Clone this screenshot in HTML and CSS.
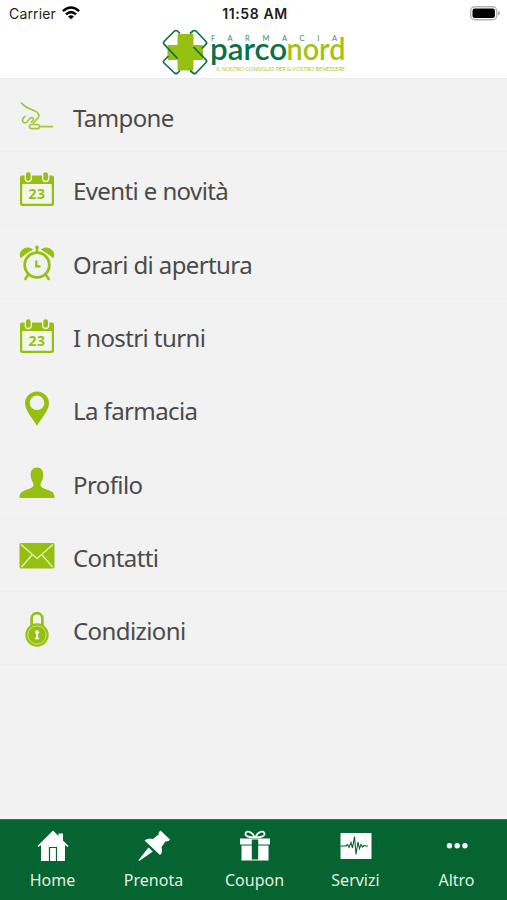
FILE: index.html
```html
<!DOCTYPE html>
<html lang="it">
<head>
  <meta charset="UTF-8">
  <meta name="viewport" content="width=device-width, initial-scale=1.0">
  <title>Farmacia Parconord</title>
  <link rel="stylesheet" href="styles.css">
</head>
<body>

  <header>
    <div class="status">
      <div class="carrier">
        <span>Carrier</span>
        <svg width="18" height="14" viewBox="0 0 18 14" fill="none" stroke="#000" stroke-width="2.500">
          <path d="M0.900 5.200Q9 -2.300 17.100 5.200"/>
          <path d="M4 8.400Q9 3.800 14 8.400"/>
          <path d="M9 13.300L6 10.400Q9 8 12 10.400Z" fill="#000" stroke="none"/>
        </svg>
      </div>
      <span class="time">11:58 AM</span>
      <svg class="battery" width="31" height="15" viewBox="0 0 31 15">
        <rect x="0.700" y="0.700" width="26" height="13" rx="4" fill="#fff" stroke="#b4b4b4" stroke-width="1.400"/>
        <rect x="2.500" y="2.500" width="22.400" height="9.400" rx="2.200"/>
        <path d="M28 5Q30 5.500 30 7.200T28 9.400Z" fill="#aaa"/>
      </svg>
    </div>

    <svg class="logo" width="186" height="48" viewBox="0 0 186 48">
      <path d="M17.500 5H31.500Q32.500 5 32.500 6V16H41Q42 16 42 17V30Q42 31 41 31H32.500V40.500Q32.500 41.500 31.500 41.500H17.500Q16.500 41.500 16.500 40.500V31H7.500Q6.500 31 6.500 30V17Q6.500 16 7.500 16H16.500V6Q16.500 5 17.500 5Z" fill="#96c010"/>
      <g fill="none" stroke="#0c7048" stroke-width="1.700" stroke-linejoin="round">
        <path d="M19 4.500L16.500 2Q15 1 13.500 2L3 12.500Q1.800 14 3 15.200L16.500 29.500"/>
        <path d="M29 4.500L32 2Q33.500 1 35 2L45 12.500Q46.300 14 45 15.200L41 19.500"/>
        <path d="M32.500 18L45 30.800Q46.300 32.200 45 33.500L35 44Q33.500 45.300 32 44L29 41.500"/>
        <path d="M7.500 27L3 31.500Q1.800 32.800 3 34L13.500 44Q15 45.300 16.500 44L19 41.500"/>
      </g>
      <text x="50" y="11.700" textLength="126" class="logo-top">FARMACIA</text>
      <text x="49" y="30.900" textLength="77" lengthAdjust="spacingAndGlyphs" class="logo-name">parco</text>
      <text x="125.500" y="30.900" textLength="59" lengthAdjust="spacingAndGlyphs" class="logo-name light">nord</text>
      <text x="55" y="41.500" textLength="129" lengthAdjust="spacingAndGlyphs" class="logo-sub">IL NOSTRO CONSIGLIO PER IL VOSTRO BENESSERE</text>
    </svg>
  </header>

  <main>
    <ul class="menu">
      <li>
        <svg class="icon" viewBox="0 -3 36 36" fill="none" stroke="#a3c83a" stroke-width="1.700" stroke-linecap="round" stroke-linejoin="round">
          <path d="M2.500 2C5 6 10 7.500 15 9.500C20 11.500 21.500 15 18 18L14.500 22"/>
          <path d="M6 15.500C3 17 2.500 21.500 6 22C9.500 22 9 17 12.500 16.500C15.500 16.500 14.500 19.500 12.500 21"/>
          <rect x="10.500" y="23.500" width="10" height="4.200" rx="2.100"/>
          <path d="M20.500 25.600H33.500"/>
        </svg>
        <span>Tampone</span>
      </li>
      <li>
        <svg class="icon" viewBox="0 0 36 36">
          <path d="M3 4.500H33Q35 4.500 35 6.500V32.500Q35 35 32.500 35H3.500Q1 35 1 32.500V6.500Q1 4.500 3 4.500Z" fill="#96c010"/>
          <rect x="3.200" y="13" width="29.600" height="19.800" rx="1" fill="#f4f6ec"/>
          <rect x="6.300" y="0.500" width="6" height="10" rx="3" fill="#96c010" stroke="#f2f2f2" stroke-width="1.300"/>
          <rect x="23.700" y="0.500" width="6" height="10" rx="3" fill="#96c010" stroke="#f2f2f2" stroke-width="1.300"/>
          <text x="9.500" y="28.300" class="day">23</text>
        </svg>
        <span>Eventi e novità</span>
      </li>
      <li>
        <svg class="icon" viewBox="0 0 36 36" fill="none" stroke="#96c010">
          <path d="M1.800 12.500C-1 6.500 6.500 0 13.500 4.500Q12 5.500 8.500 7.500Q4.500 10.500 1.800 12.500Z" fill="#96c010" stroke-width="1"/>
          <path d="M34.200 12.500C37 6.500 29.500 0 22.500 4.500Q24 5.500 27.500 7.500Q31.500 10.500 34.200 12.500Z" fill="#96c010" stroke-width="1"/>
          <circle cx="18" cy="20" r="12.300" stroke-width="2.800"/>
          <path d="M18 2.500V7.500M9 30L6.300 34M27 30L29.700 34" stroke-width="2.500" stroke-linecap="round"/>
          <circle cx="18" cy="2.200" r="1.700" fill="#96c010" stroke="none"/>
          <path d="M17.300 15.500V21.300H21.500" stroke-width="2.300"/>
        </svg>
        <span>Orari di apertura</span>
      </li>
      <li>
        <svg class="icon" viewBox="0 0 36 36">
          <path d="M3 4.500H33Q35 4.500 35 6.500V32.500Q35 35 32.500 35H3.500Q1 35 1 32.500V6.500Q1 4.500 3 4.500Z" fill="#96c010"/>
          <rect x="3.200" y="13" width="29.600" height="19.800" rx="1" fill="#f4f6ec"/>
          <rect x="6.300" y="0.500" width="6" height="10" rx="3" fill="#96c010" stroke="#f2f2f2" stroke-width="1.300"/>
          <rect x="23.700" y="0.500" width="6" height="10" rx="3" fill="#96c010" stroke="#f2f2f2" stroke-width="1.300"/>
          <text x="9.500" y="28.300" class="day">23</text>
        </svg>
        <span>I nostri turni</span>
      </li>
      <li>
        <svg class="icon" viewBox="0 0 36 36">
          <path fill-rule="evenodd" d="M18 35C15 29 6 20 6 12.500A12 12 0 0 1 30 12.500C30 20 21 29 18 35ZM18 4.500A7.300 7.300 0 1 0 18 19.100A7.300 7.300 0 1 0 18 4.500Z" fill="#96c010"/>
        </svg>
        <span>La farmacia</span>
      </li>
      <li>
        <svg class="icon" viewBox="0 0 36 36">
          <path d="M18 2.500C22.500 2.500 24.500 6 24.300 10.500C24 14.500 22.500 16.500 21.500 19C21.500 22 23 23 27 24.300C33 26.300 35.500 27.500 35.500 33H0.500C0.500 27.500 3 26.300 9 24.300C13 23 14.500 22 14.500 19C13.500 16.500 12 14.500 11.700 10.500C11.500 6 13.500 2.500 18 2.500Z" fill="#96c010"/>
        </svg>
        <span>Profilo</span>
      </li>
      <li>
        <svg class="icon" viewBox="0 0 36 36">
          <rect x="0.500" y="5" width="35" height="25.500" rx="1.500" fill="#96c010"/>
          <path d="M2 6.500L18 20.500L34 6.500M2.500 29L13 17M33.500 29L23 17" fill="none" stroke="#e6f0c4" stroke-width="1.300"/>
        </svg>
        <span>Contatti</span>
      </li>
      <li>
        <svg class="icon" viewBox="0 0 36 36">
          <path d="M12.600 15V7.500A5.400 5.400 0 0 1 23.400 7.500V15" fill="none" stroke="#96c010" stroke-width="2.700"/>
          <circle cx="18" cy="24" r="11.700" fill="#96c010"/>
          <circle cx="18" cy="24" r="9.200" fill="none" stroke="#d8e8a0" stroke-width="0.900"/>
          <circle cx="18" cy="21.300" r="2.100" fill="#f5f8ea"/>
          <path d="M17 22H19V26.500H20V28.300H16V26.500H17Z" fill="#f5f8ea"/>
        </svg>
        <span>Condizioni</span>
      </li>
    </ul>
  </main>

  <nav>
    <a class="tab">
      <svg viewBox="0 0 34 34">
        <path d="M17 1.500L22.500 7V4.500H27V11.500L32.500 17L31.500 18L29 16V32H5V16L2.500 18L1.500 17Z" fill="#fff"/>
        <path d="M13.500 32V18.500H20.500V32" fill="none" stroke="#066431" stroke-width="1.200"/>
      </svg>
      <span>Home</span>
    </a>
    <a class="tab">
      <svg viewBox="0 0 34 34">
        <path d="M23.500 1.500L33 10.500L31.500 12L28.500 12.500L24.500 18C25.500 22 25 24.500 23 26L7.500 11.500C9.500 9.500 13 9.500 16 10L21.500 5.500L22 3Z" fill="#fff"/>
        <path d="M11.500 18.500L15.800 22.500L3 31.500L1.500 32L2 30.500Z" fill="#fff"/>
      </svg>
      <span>Prenota</span>
    </a>
    <a class="tab">
      <svg viewBox="0 0 34 34" fill="#fff">
        <path d="M2 9.500H13.800V15.500H2ZM20.200 9.500H32V15.500H20.200ZM3.500 16.500H13.800V31.500H3.500ZM20.200 16.500H30.500V31.500H20.200ZM13.800 9.500H20.200V10.500H13.800ZM13.800 30.500H20.200V31.500H13.800Z"/>
        <path d="M16.500 8.500C12 8.500 7 7.500 7.500 4.500C8.500 0.500 15 3 16.500 8.500ZM17.500 8.500C22 8.500 27 7.500 26.500 4.500C25.500 0.500 19 3 17.500 8.500Z" fill="none" stroke="#fff" stroke-width="1.700"/>
      </svg>
      <span>Coupon</span>
    </a>
    <a class="tab">
      <svg viewBox="0 0 34 34">
        <rect x="1.500" y="4" width="31" height="26" rx="0.700" fill="#fff"/>
        <path d="M1.500 17H7L8.500 15.500L10 18.500L12 13.500L13.500 19L15.500 7.500L17 25.500L19 13L20.500 19.500L22 15.500L23.500 18L25 16.500L26.500 17H29" fill="none" stroke="#066431" stroke-width="1.100"/>
      </svg>
      <span>Servizi</span>
    </a>
    <a class="tab">
      <svg viewBox="0 0 34 34" fill="#fff">
        <circle cx="9.500" cy="16.800" r="2.700"/>
        <circle cx="17.200" cy="16.800" r="2.700"/>
        <circle cx="24.900" cy="16.800" r="2.700"/>
      </svg>
      <span>Altro</span>
    </a>
  </nav>

</body>
</html>
```

FILE: styles.css
```css
*, *::after, *::before {
  margin: 0;
  padding: 0;
  box-sizing: border-box;
}
body {
  display: flex;
  flex-direction: column;
  height: 100vh;
  font-family: 'Noto Sans', sans-serif;
  background: #f2f2f2;
  color: #4a4a4a;
  overflow: hidden;
}

/* header */
header {
  height: 79px;
  background: white;
  border-bottom: 1px solid #e9e9e9;
}
.status {
  display: grid;
  grid-template-columns: 1fr auto 1fr;
  align-items: center;
  height: 27px;
  padding: 0 6px 0 9px;
  font-family: Inter, sans-serif;
  font-size: 14px;
  color: #1c1c1c;
}
.carrier {
  display: flex;
  align-items: center;
  gap: 6px;
  letter-spacing: 0.15px;
}
.carrier svg {
  margin-bottom: 2px;
}
.time {
  font-weight: 600;
  letter-spacing: 0.6px;
}
.battery {
  justify-self: end;
}
.logo {
  display: block;
  margin: 2px auto 0;
  overflow: visible;
}
.logo-top {
  font-family: Lato, sans-serif;
  font-size: 7.5px;
  fill: #3f8a68;
}
.logo-name {
  font-family: Lato, sans-serif;
  font-size: 31px;
  font-weight: 600;
  fill: #0c7048;
}
.light {
  fill: #a3c414;
}
.logo-sub {
  font-family: Lato, sans-serif;
  font-size: 6px;
  fill: #a9c63a;
}

/* menu */
main {
  flex: 1;
}
.menu {
  list-style: none;
}
.menu li {
  display: flex;
  align-items: center;
  gap: 18px;
  height: 73.3px;
  padding: 2px 19px 0 19px;
  border-bottom: 1px solid #efefef;
  font-size: 24px;
  letter-spacing: -0.6px;
}
.icon {
  width: 36px;
  height: 36px;
}
.menu span {
  padding-top: 3px;
}
.day {
  font-size: 14px;
  font-weight: 700;
  letter-spacing: 0.5px;
  fill: #96c010;
}

/* bottom bar */
nav {
  display: flex;
  height: 81px;
  padding-left: 2px;
  background: #066431;
  border-top: 1px solid #2c7a50;
}
.tab {
  flex: 1;
  display: flex;
  flex-direction: column;
  align-items: center;
  padding-top: 9px;
  color: #e3f0e2;
  font-size: 16px;
}
.tab svg {
  width: 34px;
  height: 34px;
}
.tab span {
  margin-top: 6px;
}
```
